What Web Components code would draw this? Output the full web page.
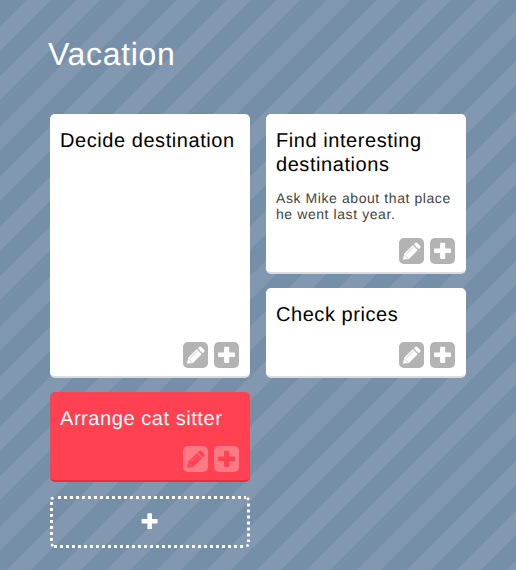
<!DOCTYPE html>
<html lang="en">
<head>
<meta charset="utf-8">
<title>Vacation</title>
<style>
body{margin:0;height:570px;overflow:hidden;background-color:#768fa9;
 background-image:linear-gradient(135deg,#768fa9 26%,#8297b0 26.6%,#8297b0 50.4%,#768fa9 51%,#768fa9 76%,#8297b0 76.6%,#8297b0 100%);
 background-size:50px 50px;font-family:"Liberation Sans",Arial,sans-serif;text-rendering:geometricPrecision}
</style>
</head>
<body>
<task-board heading="Vacation">
  <task-card slot="left" size="tall" heading="Decide destination"></task-card>
  <task-card slot="left" urgent heading="Arrange cat sitter"></task-card>
  <add-card slot="left"></add-card>
  <task-card slot="right" size="medium" heading="Find interesting destinations">Ask Mike about that place he went last year.</task-card>
  <task-card slot="right" heading="Check prices"></task-card>
</task-board>
<script>
class TaskBoard extends HTMLElement{
  connectedCallback(){
    this.attachShadow({mode:'open'}).innerHTML=`
<style>
:host{display:block;box-sizing:border-box;padding:34px 50px 0}
h1{margin:0 0 40px -2px;font-size:32px;line-height:40px;font-weight:400;letter-spacing:.65px;color:#fff}
.cols{display:grid;grid-template-columns:200px 200px;gap:16px}
.col{display:flex;flex-direction:column;gap:14px}
</style>
<h1></h1><div class="cols"><div class="col"><slot name="left"></slot></div><div class="col"><slot name="right"></slot></div></div>`;
    this.shadowRoot.querySelector('h1').textContent=this.getAttribute('heading');
  }
}
class IconButton extends HTMLElement{
  connectedCallback(){
    const plus='<path transform="translate(.4 .2)" d="M10.500 4.500h3.500a.8.8 0 0 1 .8.8v5h5a.8.8 0 0 1 .8.8v3a.8.8 0 0 1-.8.8h-5v5a.8.8 0 0 1-.8.8h-3.500a.8.8 0 0 1-.8-.8v-5H4.500a.8.8 0 0 1-.8-.8v-3a.8.8 0 0 1 .8-.8h5.200v-5a.8.8 0 0 1 .8-.8z"/>';
    const pencil='<g transform="translate(.4 1) scale(.94)"><path d="M3.800 22.200l1.300-6.500L14.200 6.600l5.300 5.300-9.100 9.100z"/><path d="M15.200 5.600l1.400-1.400a1.700 1.700 0 0 1 2.400 0l2.900 2.900a1.700 1.700 0 0 1 0 2.400L20.500 10.900z"/><path class="line" d="M8 15.500l6.500-6.500M6 17.500l2.700 2.700"/></g>';
    this.attachShadow({mode:'open'}).innerHTML=`
<style>
:host{display:block;width:25px;height:26px;border-radius:5px;background:var(--button,#b3b3b3)}
svg{display:block;fill:var(--glyph,#fff)}
.line{fill:none;stroke:var(--groove,#b3b3b3);stroke-width:.8}
</style>
<svg width="25" height="26" viewBox="0 0 25 26">${this.getAttribute('icon')==='pencil'?pencil:plus}</svg>`;
  }
}
class TaskCard extends HTMLElement{
  connectedCallback(){
    this.attachShadow({mode:'open'}).innerHTML=`
<style>
:host{display:flex;flex-direction:column;box-sizing:border-box;width:200px;height:90px;padding:15px 10px 8px;border-radius:5px;background:#fff;border-bottom:2px solid #dcdcdc;color:#000}
:host([size=tall]){height:264px}
:host([size=medium]){height:160px}
:host([urgent]){background:#ff4151;border-bottom-color:#e4303f;color:#fff;--button:#ff7a85;--glyph:#ff4151;--groove:#ff7a85}
h2{margin:0;font-size:20px;line-height:24px;font-weight:400;letter-spacing:.56px}
p{margin:13px -4px 0 0;font-size:14px;line-height:16px;letter-spacing:.58px;color:#444}
.actions{display:flex;justify-content:flex-end;gap:6px;margin-top:auto;padding-right:1px}
</style>
<h2></h2>${this.textContent.trim()?'<p><slot></slot></p>':''}
<div class="actions"><icon-button icon="pencil"></icon-button><icon-button icon="plus"></icon-button></div>`;
    this.shadowRoot.querySelector('h2').textContent=this.getAttribute('heading');
  }
}
class AddCard extends HTMLElement{
  connectedCallback(){
    this.attachShadow({mode:'open'}).innerHTML=`
<style>:host{display:block;width:200px;height:52px}svg{display:block}</style>
<svg width="200" height="52" viewBox="0 0 200 52">
<g fill="none" stroke="#fff" stroke-width="3" stroke-dasharray="3 3">
<path d="M8 1.500H196M4 50.500H196M1.500 6V46M198.500 7.500V46"/></g>
<g fill="#fff"><circle cx="2.200" cy="2.200" r="1.500"/><circle cx="198" cy="2.800" r="1.500"/><circle cx="2.200" cy="49" r="1.500"/><circle cx="197.500" cy="49.500" r="1.500"/>
<path transform="translate(-.3 -.3)" d="M98.300 17.500h3.400a.6.600 0 0 1 .6.600v5.200h5a.6.600 0 0 1 .6.600v3.200a.6.600 0 0 1-.6.600h-5v5a.6.600 0 0 1-.6.600h-3.400a.6.600 0 0 1-.6-.6v-5h-5.200a.6.600 0 0 1-.6-.6v-3.200a.6.600 0 0 1 .6-.6h5.200v-5.200a.6.600 0 0 1 .6-.6z"/></g>
</svg>`;
  }
}
customElements.define('icon-button',IconButton);
customElements.define('task-card',TaskCard);
customElements.define('add-card',AddCard);
customElements.define('task-board',TaskBoard);
</script>
</body>
</html>
